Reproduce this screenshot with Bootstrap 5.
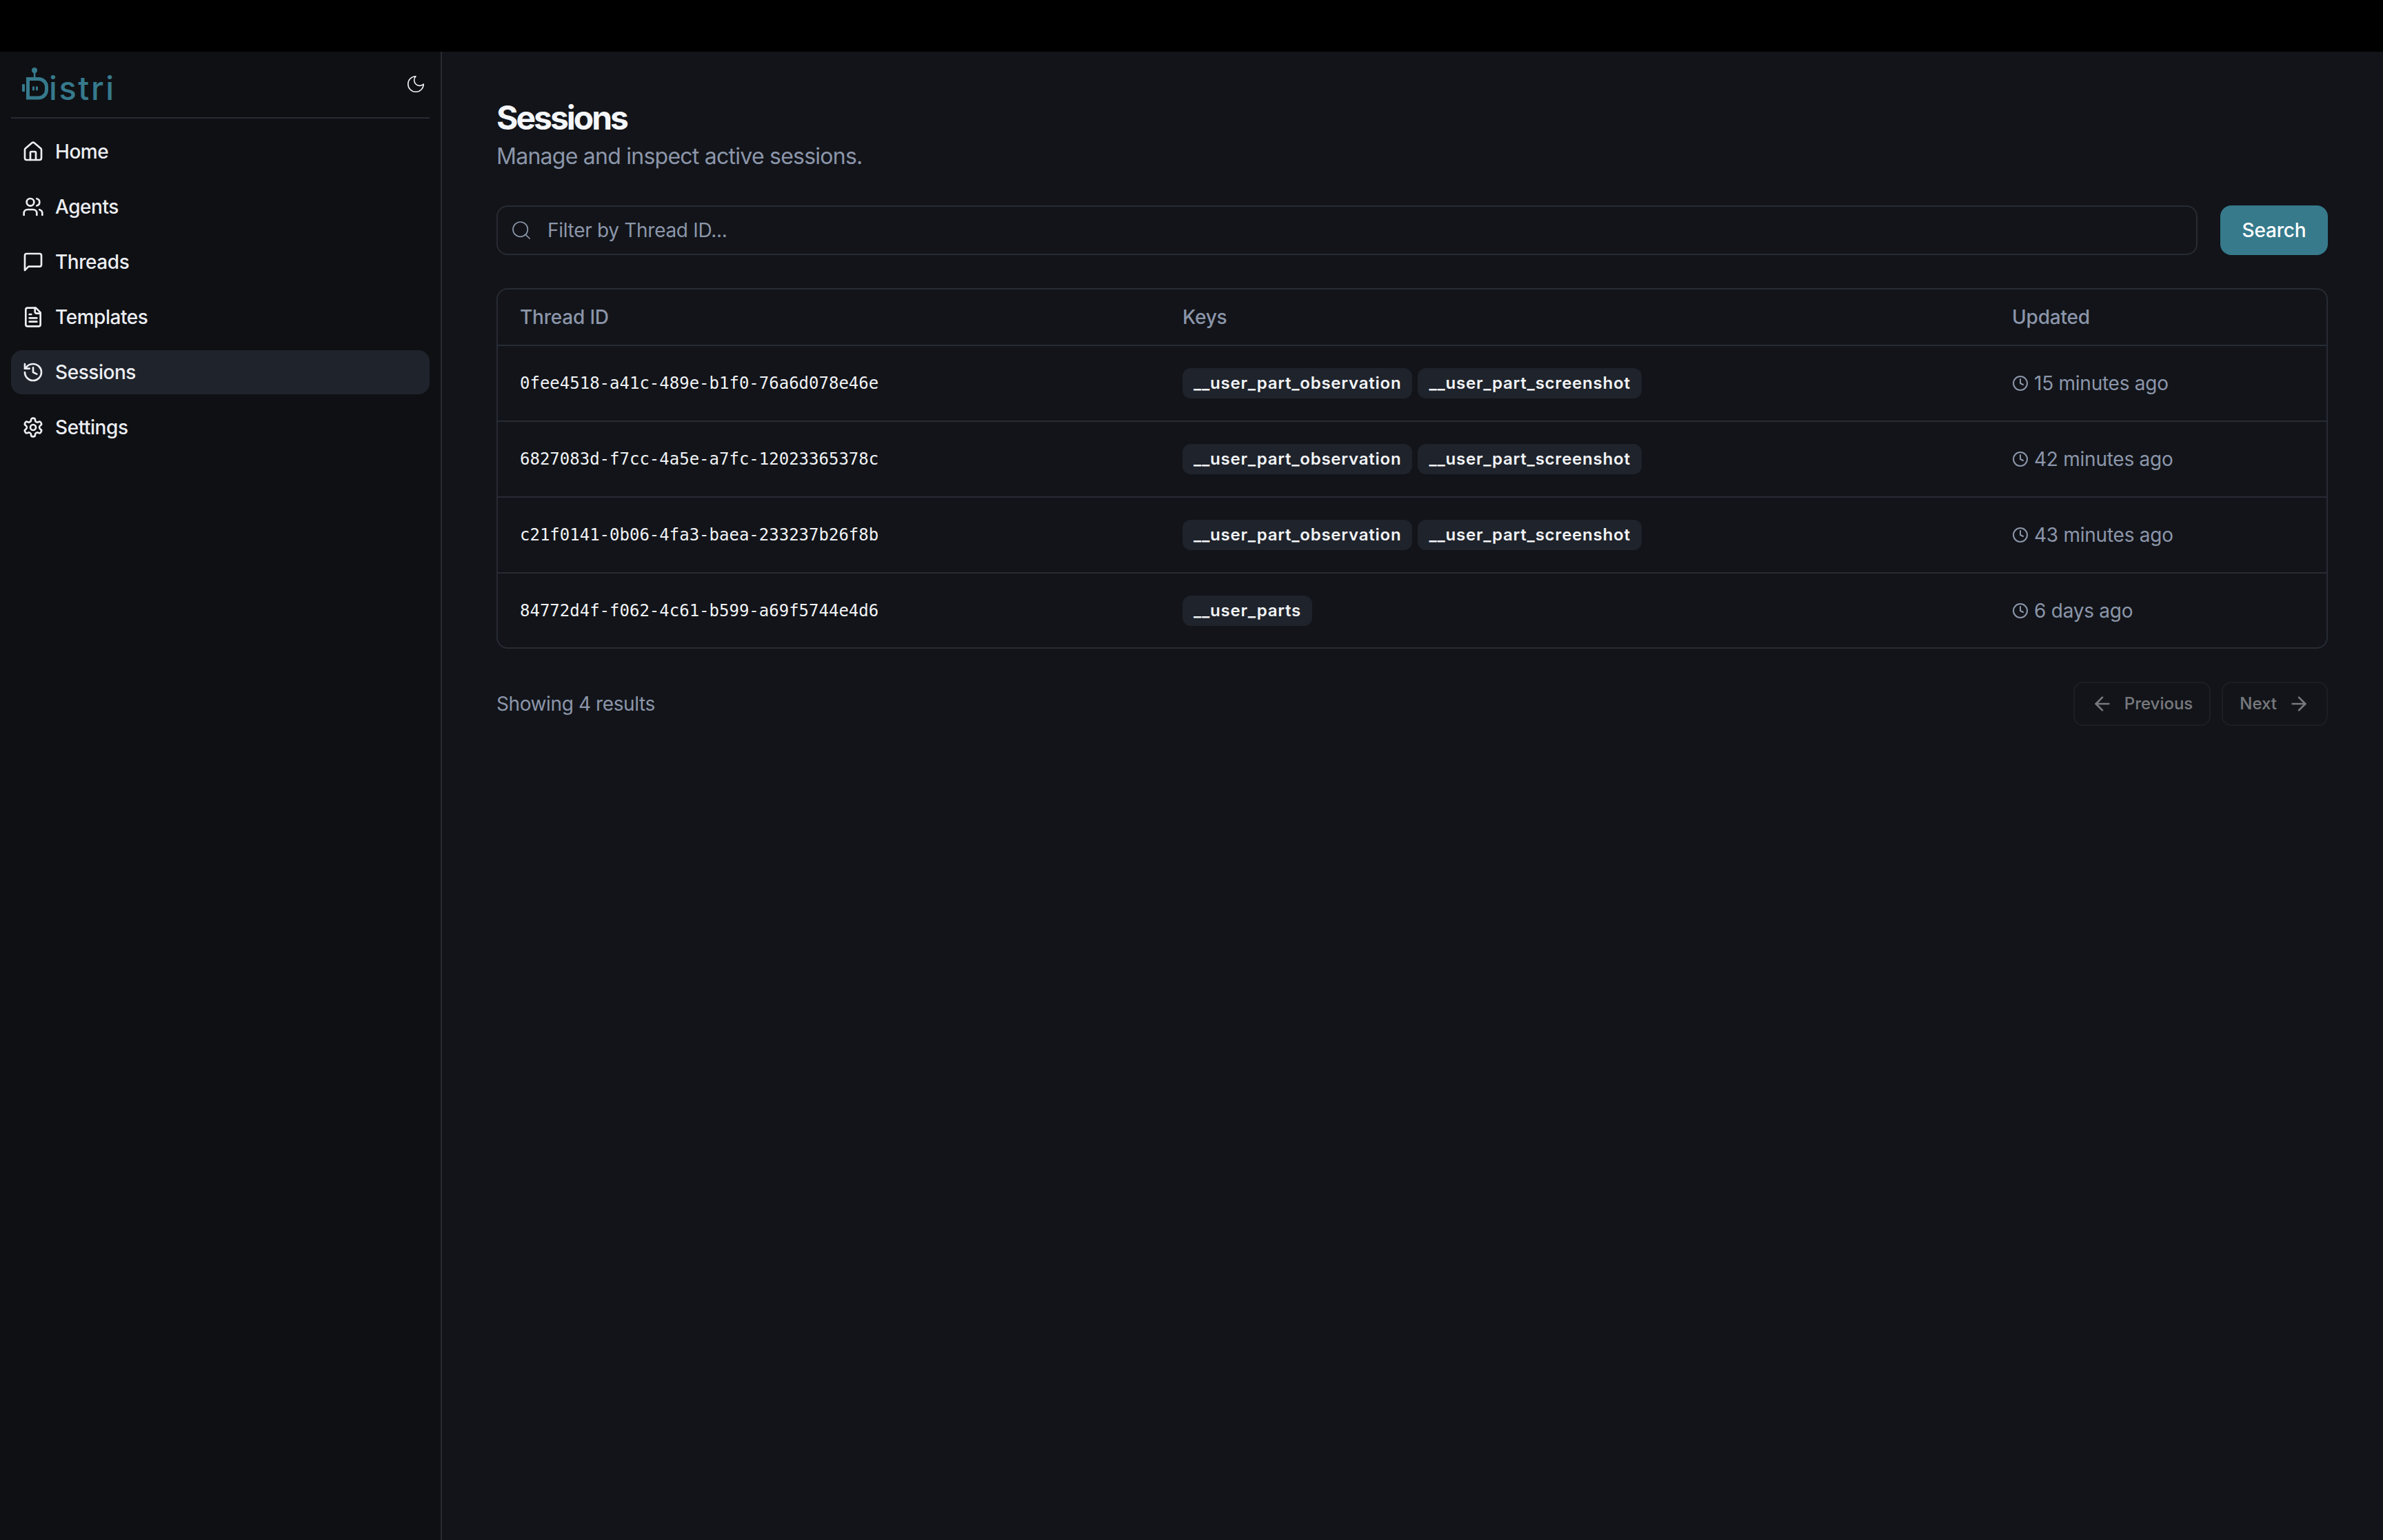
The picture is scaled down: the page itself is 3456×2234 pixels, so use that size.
<!DOCTYPE html>
<html lang="en" data-bs-theme="dark">
<head>
<meta charset="utf-8">
<title>Sessions</title>
<link href="https://cdn.jsdelivr.net/npm/bootstrap@5.3.0/dist/css/bootstrap.min.css" rel="stylesheet">
<style>
html,body{height:100%}
body{background:#000;font-family:Inter,"Liberation Sans",sans-serif;font-size:28px;line-height:40px;color:#f1f3f6}
.top-strip{height:75px;background:#000}
.shell{height:2159px}
.side-panel{width:641px;flex:none;background:#0f1014;border-right:2px solid #272b34;padding:16px}
.brand-row{height:62px;margin-bottom:17px;padding-left:16px}
.brand-mark{width:42px;height:48px;flex:none;display:block}
.brand-word{font-size:47px;line-height:48px;font-weight:500;color:#367a8c;letter-spacing:2.6px;margin-left:-3px;margin-top:11px}
.moon-btn{padding:0;border:0;background:none;color:#eef0f3;line-height:0;margin-right:5px}
.brand-sep{height:2px;background:#272b34;margin-bottom:16px}
.side-link{height:64px;padding:0 16px;gap:16px;border-radius:16px;color:#eceef2;text-decoration:none;font-weight:500;margin-bottom:16px;letter-spacing:-.45px}
.side-link.is-current{background:#1f232b}
.ico{stroke:currentColor;fill:none;stroke-width:2;stroke-linecap:round;stroke-linejoin:round;flex:none;display:block}
.ico-32{width:32px;height:32px}
.ico-24{width:24px;height:24px}
.ico-thin{stroke-width:1.3}
.main-pane{background:#121419;padding:64px 80px 0 79px;min-width:0}
.page-title{font-size:48px;line-height:64px;font-weight:700;letter-spacing:-3px;color:#f4f6f9;margin:0}
.page-sub{font-size:32px;line-height:48px;color:#8c96aa;margin:0 0 47px;letter-spacing:-.75px}
.search-box{height:72px;border:2px solid #272b34;border-radius:16px;padding-left:18px;gap:22px;color:#8c96aa}
.search-box .form-control{background:transparent;border:0;box-shadow:none;padding:0;font-size:28px;color:#f1f3f6;border-radius:0;letter-spacing:-.3px}
.search-box .form-control::placeholder{color:#8c96aa;opacity:1}
.search-btn{width:156px;height:72px;background:#367a8c;border:0;border-radius:16px;color:#fff;font-size:28px;font-weight:500;padding:0;flex:none;letter-spacing:-.2px}
.search-row{gap:33px;margin-bottom:48px}
.table-box{border:2px solid #272b34;border-radius:16px;overflow:hidden;margin-bottom:48px}
.sess-table{--bs-table-bg:transparent;--bs-table-color:#f1f3f6;--bs-table-border-color:#272b34;table-layout:fixed;margin:0;font-size:28px}
.sess-table th,.sess-table td{padding:0 32px;vertical-align:middle;border-bottom:2px solid #272b34}
.sess-table tr:last-child td{border-bottom:0}
.sess-table th{height:81px;font-weight:500;color:#8c96aa;letter-spacing:-.2px}
.sess-table td{height:110px}
.sess-table tr:last-child td{height:108px}
.col-thread{width:961px}
.col-keys{width:1203px}
.thread-id{font-family:"DejaVu Sans Mono","Liberation Mono",monospace;font-size:24px;color:#f1f3f6}
.key-chip{background:#1f232b;color:#f2f4f7;font-size:24px;line-height:44px;height:44px;font-weight:600;padding:0 16px;border-radius:12px;margin-right:8px;letter-spacing:.78px}
.when{color:#8c96aa;gap:8px;letter-spacing:-.25px}
.page-count{color:#8c96aa;letter-spacing:-.4px}
.pager{gap:16px}
.pager-btn{height:64px;border:2px solid #272b34;border-radius:14px;padding:0 24px;gap:16px;background:none;color:#f1f3f6;font-size:24px;font-weight:500;opacity:.45}
.pager-btn:disabled{border-color:#272b34;color:#f1f3f6;opacity:.45}
</style>
</head>
<body>
<svg width="0" height="0" class="position-absolute">
  <symbol id="i-home" viewBox="0 0 24 24"><path d="M15 21v-8a1 1 0 0 0-1-1h-4a1 1 0 0 0-1 1v8"/><path d="M3 10a2 2 0 0 1 .709-1.528l7-5.999a2 2 0 0 1 2.582 0l7 5.999A2 2 0 0 1 21 10v9a2 2 0 0 1-2 2H5a2 2 0 0 1-2-2z"/></symbol>
  <symbol id="i-users" viewBox="0 0 24 24"><path d="M16 21v-2a4 4 0 0 0-4-4H6a4 4 0 0 0-4 4v2"/><circle cx="9" cy="7" r="4"/><path d="M22 21v-2a4 4 0 0 0-3-3.87"/><path d="M16 3.13a4 4 0 0 1 0 7.75"/></symbol>
  <symbol id="i-msg" viewBox="0 0 24 24"><path d="M21 15a2 2 0 0 1-2 2H7l-4 4V5a2 2 0 0 1 2-2h14a2 2 0 0 1 2 2z"/></symbol>
  <symbol id="i-file" viewBox="0 0 24 24"><path d="M15 2H6a2 2 0 0 0-2 2v16a2 2 0 0 0 2 2h12a2 2 0 0 0 2-2V7Z"/><path d="M14 2v4a2 2 0 0 0 2 2h4"/><path d="M10 9H8"/><path d="M16 13H8"/><path d="M16 17H8"/></symbol>
  <symbol id="i-history" viewBox="0 0 24 24"><path d="M3 12a9 9 0 1 0 9-9 9.75 9.75 0 0 0-6.74 2.74L3 8"/><path d="M3 3v5h5"/><path d="M12 7v5l4 2"/></symbol>
  <symbol id="i-gear" viewBox="0 0 24 24"><path d="M12.22 2h-.44a2 2 0 0 0-2 2v.18a2 2 0 0 1-1 1.73l-.43.25a2 2 0 0 1-2 0l-.15-.08a2 2 0 0 0-2.73.73l-.22.38a2 2 0 0 0 .73 2.73l.15.1a2 2 0 0 1 1 1.72v.51a2 2 0 0 1-1 1.74l-.15.09a2 2 0 0 0-.73 2.73l.22.38a2 2 0 0 0 2.73.73l.15-.08a2 2 0 0 1 2 0l.43.25a2 2 0 0 1 1 1.73V20a2 2 0 0 0 2 2h.44a2 2 0 0 0 2-2v-.18a2 2 0 0 1 1-1.73l.43-.25a2 2 0 0 1 2 0l.15.08a2 2 0 0 0 2.73-.73l.22-.39a2 2 0 0 0-.73-2.73l-.15-.08a2 2 0 0 1-1-1.74v-.5a2 2 0 0 1 1-1.74l.15-.09a2 2 0 0 0 .73-2.73l-.22-.38a2 2 0 0 0-2.73-.73l-.15.08a2 2 0 0 1-2 0l-.43-.25a2 2 0 0 1-1-1.73V4a2 2 0 0 0-2-2z"/><circle cx="12" cy="12" r="3"/></symbol>
  <symbol id="i-moon" viewBox="0 0 24 24"><path d="M12 3a6 6 0 0 0 9 9 9 9 0 1 1-9-9Z"/></symbol>
  <symbol id="i-search" viewBox="0 0 24 24"><circle cx="11" cy="11" r="8"/><path d="m21 21-4.3-4.3"/></symbol>
  <symbol id="i-clock" viewBox="0 0 24 24"><circle cx="12" cy="12" r="10"/><polyline points="12 6 12 12 16 14"/></symbol>
  <symbol id="i-left" viewBox="0 0 24 24"><path d="m12 19-7-7 7-7"/><path d="M19 12H5"/></symbol>
  <symbol id="i-right" viewBox="0 0 24 24"><path d="M5 12h14"/><path d="m12 5 7 7-7 7"/></symbol>
</svg>

<div class="top-strip"></div>
<div class="shell d-flex">
  <aside class="side-panel">
    <div class="brand-row d-flex align-items-center">
      <svg class="brand-mark" viewBox="32 98 42 48" aria-hidden="true">
        <circle cx="50" cy="102" r="4" fill="#367a8c"/>
        <rect x="48.8" y="104" width="2.6" height="9" fill="#367a8c"/>
        <rect x="32" y="122" width="4" height="11" rx="1" fill="#367a8c"/>
        <path d="M40.5 114.5H56a11.5 11.5 0 0 1 11.5 11.5v4.500a11.500 11.500 0 0 1-11.500 11.500H40.500Z" fill="none" stroke="#367a8c" stroke-width="5"/>
        <rect x="47" y="125" width="3" height="6.500" rx="1.500" fill="#367a8c"/>
        <rect x="52" y="125" width="3" height="6.500" rx="1.500" fill="#367a8c"/>
      </svg>
      <span class="brand-word">istri</span>
      <button class="moon-btn ms-auto" type="button" aria-label="Toggle theme"><svg class="ico ico-thin" width="30" height="30"><use href="#i-moon"/></svg></button>
    </div>
    <div class="brand-sep"></div>
    <nav class="d-flex flex-column">
      <a class="side-link d-flex align-items-center" href="#"><svg class="ico ico-32"><use href="#i-home"/></svg>Home</a>
      <a class="side-link d-flex align-items-center" href="#"><svg class="ico ico-32"><use href="#i-users"/></svg>Agents</a>
      <a class="side-link d-flex align-items-center" href="#"><svg class="ico ico-32"><use href="#i-msg"/></svg>Threads</a>
      <a class="side-link d-flex align-items-center" href="#"><svg class="ico ico-32"><use href="#i-file"/></svg>Templates</a>
      <a class="side-link is-current d-flex align-items-center" href="#"><svg class="ico ico-32"><use href="#i-history"/></svg>Sessions</a>
      <a class="side-link d-flex align-items-center" href="#"><svg class="ico ico-32"><use href="#i-gear"/></svg>Settings</a>
    </nav>
  </aside>

  <main class="main-pane flex-grow-1">
    <h1 class="page-title">Sessions</h1>
    <p class="page-sub">Manage and inspect active sessions.</p>

    <form class="search-row d-flex">
      <div class="search-box d-flex align-items-center flex-grow-1">
        <svg class="ico ico-32 ico-thin"><use href="#i-search"/></svg>
        <input class="form-control" type="text" placeholder="Filter by Thread ID...">
      </div>
      <button class="btn search-btn" type="button">Search</button>
    </form>

    <div class="table-box">
      <table class="table sess-table">
        <thead>
          <tr><th class="col-thread">Thread ID</th><th class="col-keys">Keys</th><th>Updated</th></tr>
        </thead>
        <tbody>
          <tr>
            <td class="thread-id">0fee4518-a41c-489e-b1f0-76a6d078e46e</td>
            <td><span class="badge key-chip">__user_part_observation</span><span class="badge key-chip">__user_part_screenshot</span></td>
            <td><div class="when d-flex align-items-center"><svg class="ico ico-24"><use href="#i-clock"/></svg>15 minutes ago</div></td>
          </tr>
          <tr>
            <td class="thread-id">6827083d-f7cc-4a5e-a7fc-12023365378c</td>
            <td><span class="badge key-chip">__user_part_observation</span><span class="badge key-chip">__user_part_screenshot</span></td>
            <td><div class="when d-flex align-items-center"><svg class="ico ico-24"><use href="#i-clock"/></svg>42 minutes ago</div></td>
          </tr>
          <tr>
            <td class="thread-id">c21f0141-0b06-4fa3-baea-233237b26f8b</td>
            <td><span class="badge key-chip">__user_part_observation</span><span class="badge key-chip">__user_part_screenshot</span></td>
            <td><div class="when d-flex align-items-center"><svg class="ico ico-24"><use href="#i-clock"/></svg>43 minutes ago</div></td>
          </tr>
          <tr>
            <td class="thread-id">84772d4f-f062-4c61-b599-a69f5744e4d6</td>
            <td><span class="badge key-chip">__user_parts</span></td>
            <td><div class="when d-flex align-items-center"><svg class="ico ico-24"><use href="#i-clock"/></svg>6 days ago</div></td>
          </tr>
        </tbody>
      </table>
    </div>

    <div class="d-flex align-items-center justify-content-between">
      <span class="page-count">Showing 4 results</span>
      <div class="pager d-flex">
        <button class="btn pager-btn d-flex align-items-center" type="button" disabled><svg class="ico ico-32"><use href="#i-left"/></svg>Previous</button>
        <button class="btn pager-btn d-flex align-items-center" type="button" disabled>Next<svg class="ico ico-32"><use href="#i-right"/></svg></button>
      </div>
    </div>
  </main>
</div>
<script src="https://cdn.jsdelivr.net/npm/bootstrap@5.3.0/dist/js/bootstrap.bundle.min.js"></script>
</body>
</html>
